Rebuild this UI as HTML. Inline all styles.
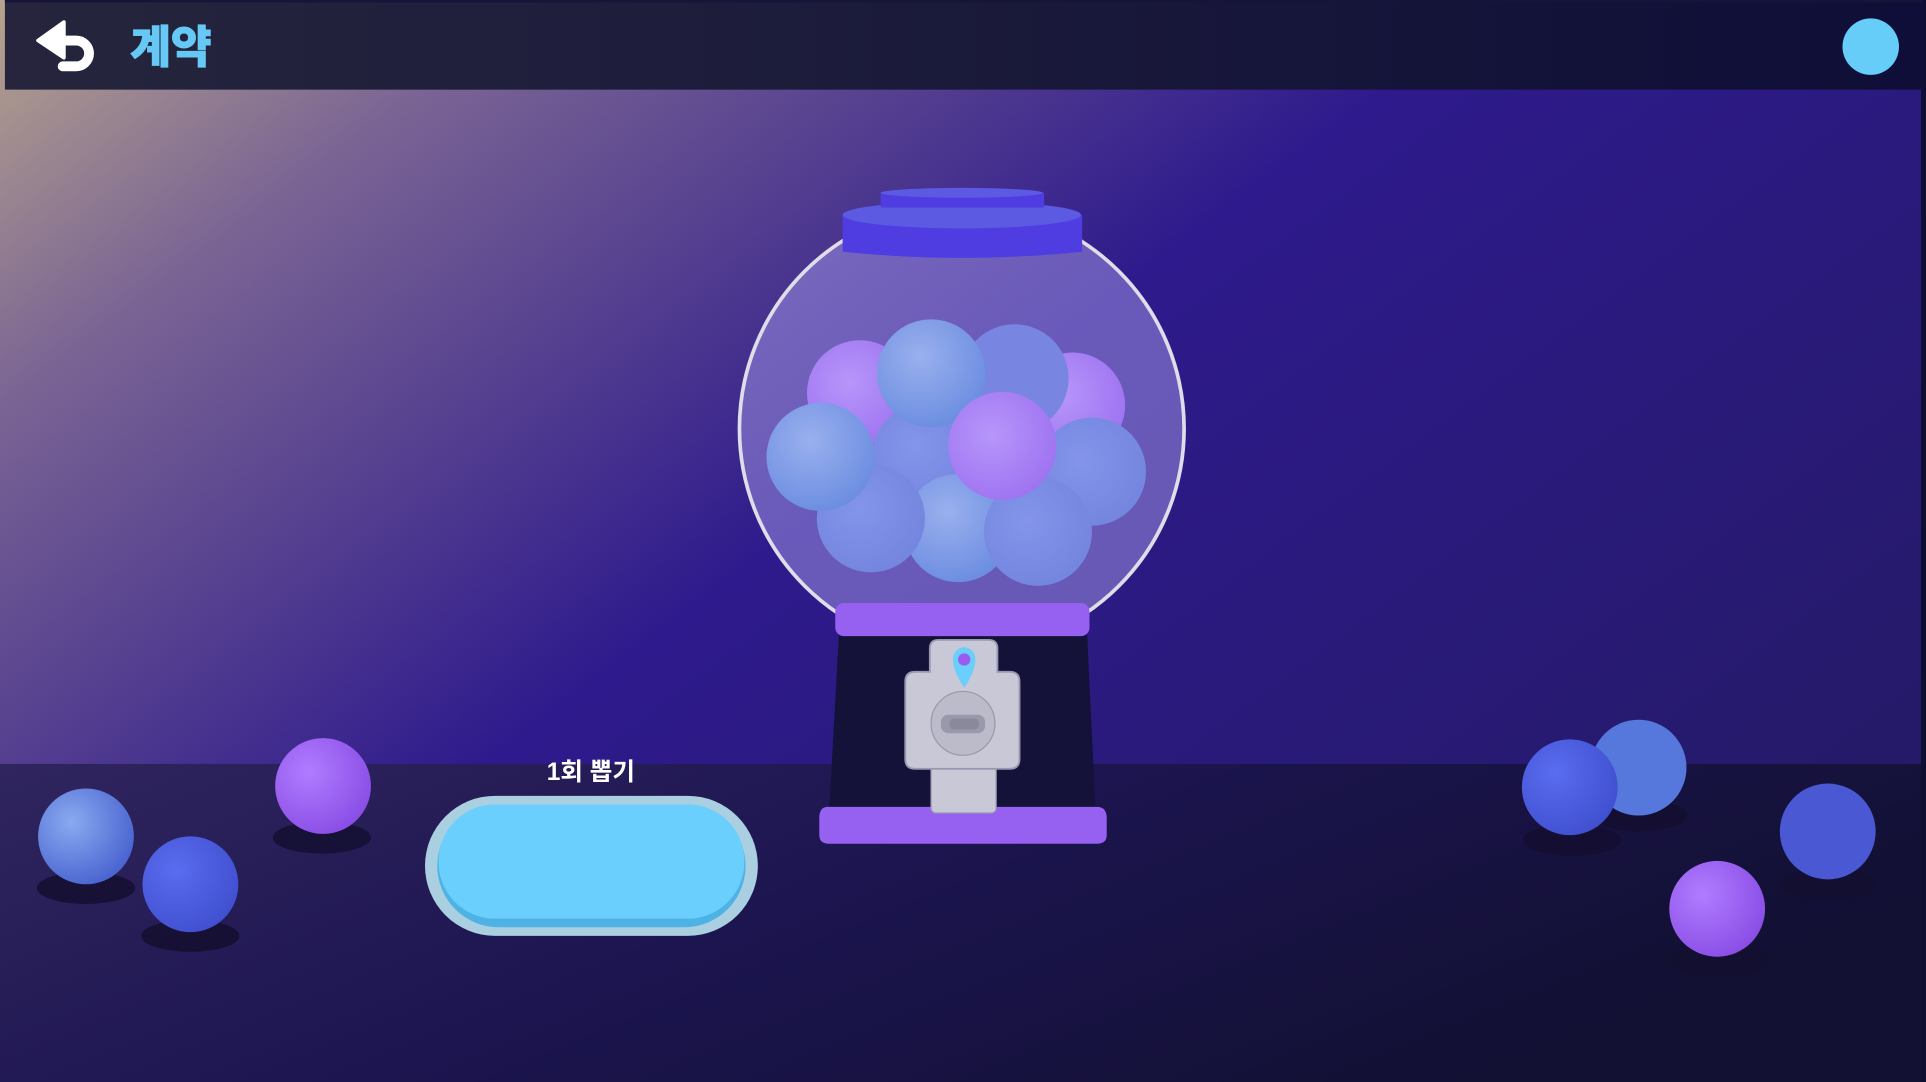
<!DOCTYPE html>
<html><head><meta charset="utf-8"><style>
html,body{margin:0;padding:0;width:1926px;height:1082px;overflow:hidden;background:#1a1540}
svg{display:block}
</style></head><body>
<svg width="1926" height="1082" viewBox="0 0 1568 881" preserveAspectRatio="none" xmlns="http://www.w3.org/2000/svg">
<defs>
<linearGradient id="bg" x1="0" y1="0" x2="1" y2="0.75">
<stop offset="0" stop-color="#b7a48c"/><stop offset="0.18" stop-color="#7a6494"/>
<stop offset="0.5" stop-color="#2e1a8c"/><stop offset="1" stop-color="#241a66"/></linearGradient>
<linearGradient id="fl" x1="0" y1="0" x2="1" y2="0.4">
<stop offset="0" stop-color="#30255e"/><stop offset="0.5" stop-color="#1c1550"/><stop offset="1" stop-color="#121033"/></linearGradient>
<linearGradient id="hd" x1="0" y1="0" x2="1" y2="0">
<stop offset="0" stop-color="#26253d"/><stop offset="1" stop-color="#0e0e38"/></linearGradient>
<radialGradient id="gl" cx="0.4" cy="0.35" r="0.7"><stop offset="0" stop-color="#9ab0ee"/><stop offset="1" stop-color="#6a8ce0"/></radialGradient>
<radialGradient id="gp" cx="0.4" cy="0.4" r="0.7"><stop offset="0" stop-color="#b696fa"/><stop offset="1" stop-color="#9d70f0"/></radialGradient>
<radialGradient id="gb" cx="0.4" cy="0.4" r="0.7"><stop offset="0" stop-color="#8394ea"/><stop offset="1" stop-color="#7384de"/></radialGradient>
<radialGradient id="fb" cx="0.35" cy="0.35" r="0.7"><stop offset="0" stop-color="#5a6cf0"/><stop offset="1" stop-color="#4050d0"/></radialGradient>
<radialGradient id="fp" cx="0.35" cy="0.35" r="0.7"><stop offset="0" stop-color="#b07cff"/><stop offset="1" stop-color="#8a4ee6"/></radialGradient>
<radialGradient id="fl2" cx="0.35" cy="0.35" r="0.7"><stop offset="0" stop-color="#8aaaf0"/><stop offset="1" stop-color="#4a64d0"/></radialGradient>
</defs>
<rect width="1568" height="881" fill="url(#bg)"/>
<rect x="0" y="622" width="1568" height="259" fill="url(#fl)"/>
<rect x="1564" y="73" width="4" height="808" fill="#0e0e30"/>
<!-- header -->
<rect x="4" y="0" width="1561" height="73" fill="url(#hd)"/>
<rect x="4" y="0" width="1561" height="2" fill="#15153a"/>
<rect x="1565" y="0" width="3" height="73" fill="#0e0e30"/>
<path d="M52 18 L31 33 L52 47 Z" fill="#fff" stroke="#fff" stroke-width="3" stroke-linejoin="round"/>
<path d="M46 33 H62 A10.5 10.5 0 0 1 62 54 H51" stroke="#fff" stroke-width="8" fill="none" stroke-linecap="round"/>
<text x="106" y="51" font-family="'Liberation Sans','Noto Sans CJK KR',sans-serif" font-weight="900" font-size="36" fill="#66c8f5" stroke="#66c8f5" stroke-width="0.8">계약</text>
<circle cx="1523" cy="38" r="23" fill="#66ccf8"/>
<!-- floor ball shadows -->
<g fill="#140f30" opacity="0.85">
<ellipse cx="70" cy="723" rx="40" ry="13"/><ellipse cx="155" cy="762" rx="40" ry="13"/><ellipse cx="262" cy="682" rx="40" ry="13"/>
<ellipse cx="1334" cy="664" rx="40" ry="13"/><ellipse cx="1280" cy="684" rx="40" ry="13"/><ellipse cx="1488" cy="720" rx="40" ry="13"/><ellipse cx="1399" cy="782" rx="40" ry="13"/>
</g>
<circle cx="70" cy="681" r="39" fill="url(#fl2)"/>
<circle cx="155" cy="720" r="39" fill="url(#fb)"/>
<circle cx="263" cy="640" r="39" fill="url(#fp)"/>
<circle cx="1334" cy="625" r="39" fill="#5678dc"/>
<circle cx="1278" cy="641" r="39" fill="url(#fb)"/>
<circle cx="1488" cy="677" r="39" fill="#4a58d4"/>
<circle cx="1398" cy="740" r="39" fill="url(#fp)"/>
<!-- globe -->
<circle cx="783" cy="349" r="181" fill="#9a8ee0" fill-opacity="0.55" stroke="#e0dce8" stroke-width="3"/>
<circle cx="700" cy="320" r="43" fill="url(#gp)"/>
<circle cx="873" cy="330" r="43" fill="url(#gp)"/>
<circle cx="826" cy="308" r="44" fill="#7886e2"/>
<circle cx="754" cy="372" r="44" fill="url(#gb)"/>
<circle cx="780" cy="430" r="44" fill="url(#gl)"/>
<circle cx="889" cy="384" r="44" fill="url(#gb)"/>
<circle cx="709" cy="422" r="44" fill="url(#gb)"/>
<circle cx="758" cy="304" r="44" fill="url(#gl)"/>
<circle cx="845" cy="433" r="44" fill="url(#gb)"/>
<circle cx="668" cy="372" r="44" fill="url(#gl)"/>
<circle cx="816" cy="363" r="44" fill="url(#gp)"/>
<!-- lid -->
<path d="M686 175 H881 V205 Q783 215 686 205 Z" fill="#4f3de2"/>
<ellipse cx="783" cy="175" rx="97" ry="11" fill="#5c5ae2"/>
<rect x="717" y="157" width="133" height="12" fill="#4f3de2"/>
<ellipse cx="783" cy="157" rx="66" ry="4" fill="#5c5ae2"/>
<!-- base -->
<path d="M683 515 H885 L892 662 H675 Z" fill="#15123a"/>
<rect x="680" y="491" width="207" height="27" rx="7" fill="#9660f0"/>
<path d="M674 657 H893 Q901 657 901 666 V680 Q901 687 893 687 H675 Q667 687 667 680 V666 Q667 657 674 657Z" fill="#9660f0"/>
<!-- coin mech -->
<rect x="758" y="622" width="53" height="40" rx="4" fill="#c9c8d6" stroke="#9a98b0" stroke-width="1"/>
<path d="M764 521 H805 Q812 521 812 528 V547 H822 Q830 547 830 555 V618 Q830 626 822 626 H745 Q737 626 737 618 V555 Q737 547 745 547 H757 V528 Q757 521 764 521Z" fill="#c9c8d6" stroke="#9a98b0" stroke-width="1.5"/>
<path d="M785 560 Q775 545 776 536 A9 9 0 0 1 794 536 Q795 545 785 560Z" fill="#6acffc"/>
<circle cx="785" cy="537" r="5" fill="#9a5cf0"/>
<circle cx="784" cy="589" r="26" fill="#bcbbc9" stroke="#9a98b0" stroke-width="1"/>
<rect x="766" y="582" width="36" height="15" rx="6" fill="#9a99ac"/>
<rect x="773" y="585" width="24" height="9" rx="4" fill="#8a899c"/>
<!-- button -->
<text x="481" y="635" text-anchor="middle" font-family="'Liberation Sans','Noto Sans CJK KR',sans-serif" font-weight="bold" font-size="20" fill="#fff">1회 뽑기</text>
<rect x="346" y="648" width="271" height="114" rx="57" fill="#a9cfe0"/>
<rect x="356" y="655" width="251" height="100" rx="50" fill="#4fb2e4"/>
<rect x="357" y="655" width="249" height="93" rx="46" fill="#6acffc"/>
</svg>
</body></html>
